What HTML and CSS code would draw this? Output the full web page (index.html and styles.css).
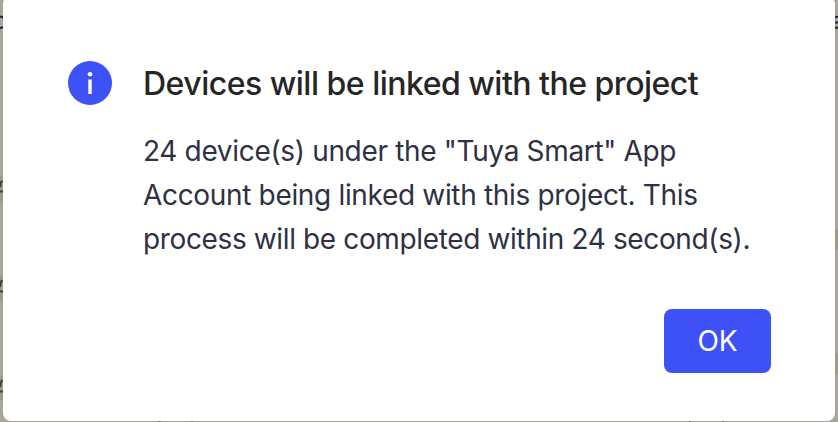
FILE: index.html
```html
<!DOCTYPE html>
<html lang="en">
<head>
<meta charset="utf-8">
<title>Devices</title>
<link rel="stylesheet" href="styles.css">
</head>
<body>
<div class="page">
  <svg class="backdrop" width="838" height="422" viewBox="0 0 838 422" aria-hidden="true">
    <g fill="#9f9a80">
      <path d="M0 176h6v25H0zM0 276h6v25H0zM0 376h6v24H0zM832 229h6v21h-6zM832 353h6v21h-6z"/>
    </g>
    <g fill="none" stroke="#202534" stroke-width="2">
      <path d="M0 16.5q2 0 4 2M0 28q2 0 4-1.5"/>
      <path d="M838 17q-2-1-4 1M834 22.5h4M834 26.5q2 2 4 1"/>
    </g>
    <g fill="none" stroke="#3b3f52" stroke-width="2">
      <path d="M0 187l1-5q1-1 2 0M0 191.5h4M0 287l1-5q1-2 2-1M0 291.5h4M0 387l1-5q1-2 2-1M0 391.5h4"/>
    </g>
    <path d="M158 421.5h3M191 421.5h2M689 421.5h2M722 421.5h2" stroke="#777" stroke-width="1"/>
  </svg>
  <section class="dialog" role="alertdialog" aria-labelledby="title">
    <div class="content">
      <svg class="icon" width="44" height="44" viewBox="0 0 44 44" aria-hidden="true">
        <circle cx="22" cy="22" r="22" fill="#3d51f7"/>
        <circle cx="22" cy="13.3" r="2.3" fill="#fff"/>
        <path d="M20.3 18.5h3.4V33h-3.4z" fill="#fff"/>
      </svg>
      <div class="copy">
        <h1 class="title" id="title">Devices will be linked with the project</h1>
        <p class="message">
          <span class="line">24 device(s) under the "Tuya Smart" App</span>
          <span class="line">Account being linked with this project. This</span>
          <span class="line line-last">process will be completed within 24 second(s).</span>
        </p>
      </div>
    </div>
    <div class="actions"><button class="ok" type="button">OK</button></div>
  </section>
</div>
</body>
</html>
```
FILE: styles.css
```css
* { box-sizing: border-box; }
body {
  margin: 0;
  overflow: hidden;
  background: #a8a69b;
  font-family: Inter, "Liberation Sans", sans-serif;
}
.page {
  position: relative;
  width: 838px;
  height: 422px;
  padding: 0 3px 1px;
  overflow: hidden;
}
.backdrop { position: absolute; inset: 0; }
.dialog {
  position: relative;
  height: 425px;
  margin-top: -4px;
  padding: 64px 64px 48px 65px;
  border-radius: 8px;
  background: #fff;
  display: flex;
  flex-direction: column;
  justify-content: space-between;
}
.content { display: flex; gap: 31px; }
.icon { flex: none; margin-top: 1px; }
.copy { padding-top: 1px; white-space: nowrap; }
.title {
  margin: 0;
  font-size: 32px;
  line-height: 45px;
  font-weight: 500;
  letter-spacing: -0.5px;
  color: #262626;
}
.message {
  margin: 23px 0 0;
  font-size: 28px;
  line-height: 44px;
  letter-spacing: -0.33px;
  color: #2d3142;
}
.line { display: block; }
.line-last { letter-spacing: -0.37px; }
.actions { display: flex; justify-content: flex-end; }
.ok {
  width: 107px;
  height: 64px;
  padding: 0;
  border: 0;
  border-radius: 8px;
  background: #3d51f7;
  color: #fff;
  font: 400 28px/64px Inter, "Liberation Sans", sans-serif;
}
```
